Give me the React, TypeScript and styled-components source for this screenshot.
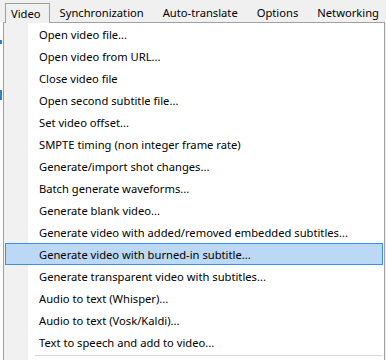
import styled, { createGlobalStyle } from "styled-components";

const GlobalStyle = createGlobalStyle`
  html, body {
    margin: 0;
    padding: 0;
    background: #f0f0f0;
  }
  body {
    font-family: "Noto Sans", "Open Sans", sans-serif;
    font-size: 11.2px;
    color: #000;
  }
`;

const Screen = styled.div`
  position: relative;
  width: 386px;
  height: 360px;
  overflow: hidden;
  background: #f0f0f0;
`;

const MenuBar = styled.div`
  height: 22px;
  display: flex;
  align-items: flex-end;
  padding-left: 5px;
  background: #f0f0f0;
`;

const MenuTab = styled.div<{ $open?: boolean }>`
  position: relative;
  z-index: 2;
  height: ${(p) => (p.$open ? "20px" : "19px")};
  margin-bottom: ${(p) => (p.$open ? "-1px" : "0")};
  padding: ${(p) => (p.$open ? "1px 8px 0 5px" : "0 8px 0 9px")};
  display: flex;
  align-items: center;
  box-sizing: border-box;
  border: ${(p) => (p.$open ? "1px solid #a0a0a0" : "1px solid transparent")};
  border-bottom: none;
  background: #f0f0f0;
  white-space: nowrap;
  line-height: 16px;
`;

const WindowBehind = styled.div`
  height: 338px;
  width: 3px;
  background: #fcfcfc;
  display: flex;
  flex-direction: column;
`;

const BlueMark = styled.div<{ $top: number; $h: number }>`
  margin-top: ${(p) => p.$top}px;
  height: ${(p) => p.$h}px;
  width: 2px;
  background: #2d7fd8;
`;

const Dropdown = styled.div`
  position: absolute;
  z-index: 1;
  left: 3px;
  top: 22px;
  width: 382px;
  height: 345px;
  box-sizing: border-box;
  border: 1px solid #a0a0a0;
  background: linear-gradient(to right, #f1f1f1 0 24px, #ffffff 24px);
  display: flex;
  flex-direction: column;
`;

const Item = styled.div<{ $active?: boolean }>`
  height: 22px;
  margin: 0 1px;
  box-sizing: border-box;
  display: flex;
  align-items: center;
  padding: 2px 0 0 33px;
  white-space: nowrap;
  line-height: 16px;
  border: 1px solid ${(p) => (p.$active ? "#3d8ee6" : "transparent")};
  background: ${(p) => (p.$active ? "#bbd8f5" : "transparent")};
`;

const Separator = styled.div`
  height: 1px;
  margin: 2px 1px 0 31px;
  background: #d7d7d7;
`;

const tabs = ["Synchronization", "Auto-translate", "Options", "Networking"];

const items = [
  "Open video file...",
  "Open video from URL...",
  "Close video file",
  "Open second subtitle file...",
  "Set video offset...",
  "SMPTE timing (non integer frame rate)",
  "Generate/import shot changes...",
  "Batch generate waveforms...",
  "Generate blank video...",
  "Generate video with added/removed embedded subtitles...",
  "Generate video with burned-in subtitle...",
  "Generate transparent video with subtitles...",
  "Audio to text (Whisper)...",
  "Audio to text (Vosk/Kaldi)...",
  "Text to speech and add to video...",
];

export default function App() {
  return (
    <Screen>
      <GlobalStyle />
      <MenuBar>
        <MenuTab $open>Video</MenuTab>
        {tabs.map((t) => (
          <MenuTab key={t}>{t}</MenuTab>
        ))}
      </MenuBar>
      <WindowBehind>
        <BlueMark $top={18} $h={4} />
        <BlueMark $top={46} $h={10} />
      </WindowBehind>
      <Dropdown>
        {items.map((label, i) => (
          <Item key={label} $active={i === 10}>
            {label}
          </Item>
        ))}
        <Separator />
      </Dropdown>
    </Screen>
  );
}
